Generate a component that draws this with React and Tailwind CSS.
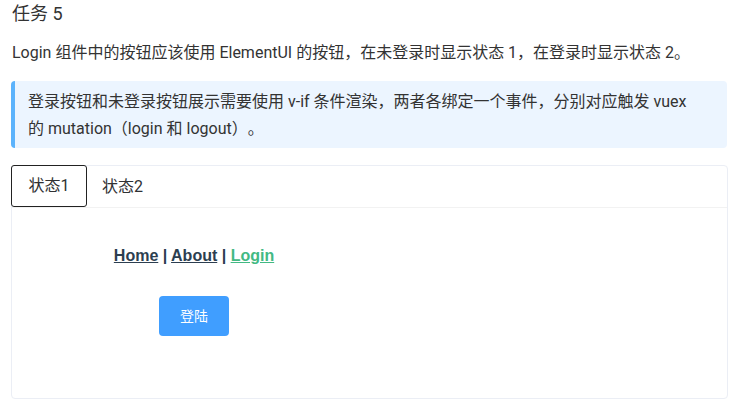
export default function App() {
  const font = { fontFamily: 'Roboto, "Noto Sans CJK SC", sans-serif' };
  return (
    <div
      className="w-[744px] h-[405px] bg-white px-[11px] text-[#303133] overflow-hidden [text-spacing-trim:space-all]"
      style={font}
    >
      <h3 className="text-[18px] leading-[24px] pt-[2px] pl-[1px] text-[#333]">任务 5</h3>
      <p className="text-[16px] leading-[22px] mt-[16px] pl-[1px] text-[#333] whitespace-nowrap">
        Login 组件中的按钮应该使用 ElementUI 的按钮，在未登录时显示状态 1，在登录时显示状态 2。
      </p>
      <div className="mt-[17px] w-[716px] h-[67px] bg-[#ecf5ff] border-l-4 border-[#5cb3fc] rounded-[4px] pl-[13px] pt-[7px] text-[16px] leading-[27px] text-[#333] whitespace-nowrap">
        登录按钮和未登录按钮展示需要使用 v-if 条件渲染，两者各绑定一个事件，分别对应触发 vuex
        <br />
        的 mutation（login 和 logout）。
      </div>
      <div className="mt-[17px] w-[717px] h-[234px] border border-[#ebeef5] rounded-[4px] flex flex-col">
        <div className="flex h-[42px] border-b border-[#f2f2f2] text-[16px] text-[#303133]">
          <div className="w-[76px] h-[42px] -mt-px -ml-px border border-[#222] rounded-[3px] flex items-center justify-center">
            状态1
          </div>
          <div className="pl-[15px] flex items-center">状态2</div>
        </div>
        <div className="flex flex-col items-center w-[160px] ml-[102px] pt-[38px]">
          <div
            className="text-[16px] leading-[20px] font-bold text-[#2c3e50] whitespace-nowrap"
            style={{ fontFamily: '"Liberation Sans", Arial, sans-serif' }}
          >
            <a className="underline">Home</a> | <a className="underline">About</a> |{" "}
            <a className="underline text-[#42b983]">Login</a>
          </div>
          <button className="mt-[30px] w-[70px] h-[40px] bg-[#409eff] rounded-[4px] text-white text-[14px]">
            登陆
          </button>
        </div>
      </div>
    </div>
  );
}
